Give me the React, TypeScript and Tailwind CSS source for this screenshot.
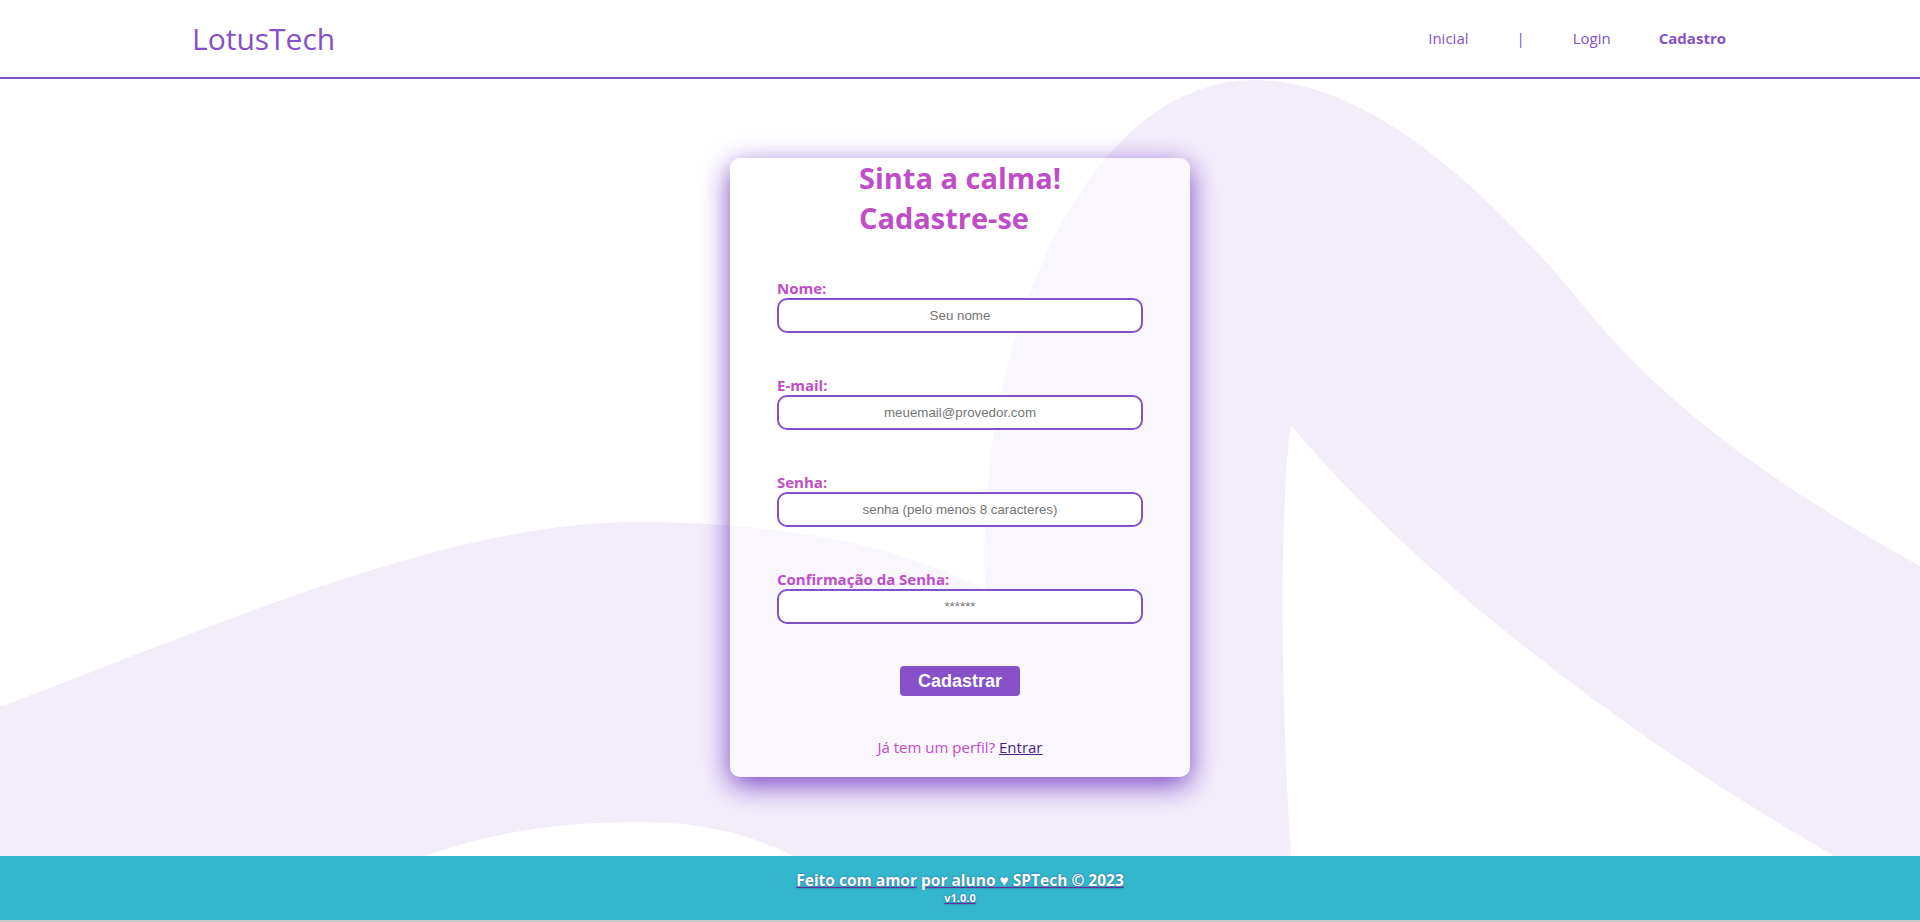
const FIELDS = [
  { label: "Nome:", placeholder: "Seu nome", type: "text" },
  { label: "E-mail:", placeholder: "meuemail@provedor.com", type: "email" },
  { label: "Senha:", placeholder: "senha (pelo menos 8 caracteres)", type: "password" },
  { label: "Confirmação da Senha:", placeholder: "******", type: "password" },
];

function Waves() {
  // background ribbon, drawn in page coordinates
  return (
    <svg
      aria-hidden
      className="absolute inset-0 h-full w-full"
      viewBox="0 0 1920 922"
      preserveAspectRatio="none"
    >
      <path
        fill="#F3EDFA"
        d="M0,707 C230,620 450,522 637,522 C780,522 900,545 985,590 C975,330 1090,80 1254,80 C1370,80 1490,190 1597,322 C1680,420 1800,500 1920,566 L1920,904 C1650,760 1420,580 1291,425 C1280,500 1278,700 1296,922 L880,922 C800,840 720,822 637,822 C520,822 410,845 300,922 L0,922 Z"
      />
    </svg>
  );
}

export default function App() {
  return (
    <div className="relative flex h-screen flex-col overflow-hidden bg-white font-['Open_Sans',sans-serif]">
      <Waves />

      {/* Header */}
      <header className="relative z-10 h-[79px] shrink-0 border-b-2 border-[#8451C9] bg-white">
        <div className="mx-auto flex h-full w-4/5 items-center justify-between">
          <span className="text-[30px] leading-none text-[#8451C9]">LotusTech</span>
          <nav className="flex items-center gap-[48px] pr-[2px] text-[15px] text-[#8451C9]">
            <a href="#">Inicial</a>
            <span>|</span>
            <a href="#">Login</a>
            <a href="#" className="font-bold">Cadastro</a>
          </nav>
        </div>
      </header>

      {/* Form */}
      <main className="relative z-10 flex flex-1 items-center justify-center">
        <div className="flex h-[619px] w-[460px] flex-col rounded-[10px] bg-white/50 px-[47px] shadow-[0_8px_28px_rgba(120,70,200,1)]">
          <div className="flex justify-center">
            <h1 className="text-[29px] font-bold leading-[40px] text-[#C04DC8]">
              Sinta a calma!
              <br />
              Cadastre-se
            </h1>
          </div>

          <form className="mt-[40px] flex flex-col">
            {FIELDS.map((f) => (
              <div key={f.label} className="mb-[42px] flex flex-col">
                <label className="text-[15px] font-bold leading-5 text-[#C04DC8]">{f.label}</label>
                <input
                  type={f.type}
                  placeholder={f.placeholder}
                  className="h-[35px] rounded-[10px] border-2 border-[#8451C9] bg-white text-center font-['Liberation_Sans',Arial,sans-serif] text-[13.33px] outline-none placeholder:text-[#757575]"
                />
              </div>
            ))}
            <div className="flex justify-center">
              <button
                type="button"
                className="h-[30px] w-[120px] rounded-[4px] bg-[#8451C9] font-['Liberation_Sans',Arial,sans-serif] text-[18px] font-bold text-white"
              >
                Cadastrar
              </button>
            </div>
          </form>

          <p className="mt-[41px] text-center text-[15px] leading-5 text-[#C04DC8]">
            Já tem um perfil?{" "}
            <a href="#" className="text-[#4A1F86] underline">
              Entrar
            </a>
          </p>
        </div>
      </main>

      {/* Footer */}
      <footer className="relative z-10 flex h-[66px] shrink-0 flex-col items-center justify-center border-b-2 border-[#c9c9c9] bg-[#33B7CC] font-bold text-white [text-shadow:0_0_2px_rgba(70,30,110,0.6)]">
        <p className="text-[15.5px] leading-5">
          <a href="#" className="underline decoration-[#6A2C9C]">Feito com amor</a>{" "}
          <a href="#" className="underline decoration-[#6A2C9C]">por aluno ♥ SPTech © 2023</a>
        </p>
        <a href="#" className="text-[11px] leading-4 underline decoration-[#6A2C9C]">v1.0.0</a>
      </footer>
    </div>
  );
}
